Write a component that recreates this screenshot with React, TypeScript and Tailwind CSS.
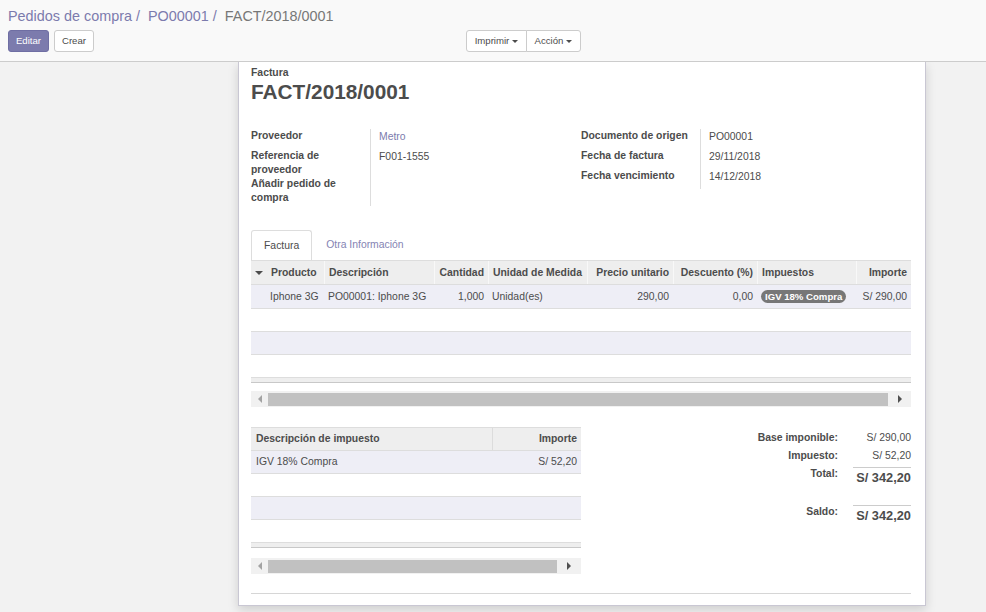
import React from "react";

const LINE_COLS = "grid grid-cols-[16px_57px_110px_54px_99px_86px_84px_99px_55px]";
const TAX_COLS = "grid grid-cols-[242px_88px]";

function Caret({ small }: { small?: boolean }) {
  return (
    <span
      className={`inline-block h-0 w-0 border-x-transparent border-t-[#4c4c4c] ${small ? "border-x-[3px] border-t-[3px]" : "border-x-[4px] border-t-[4px]"}`}
    />
  );
}

function Scrollbar({ thumb }: { thumb: string }) {
  return (
    <div className="flex h-[16px] items-center bg-[#f1f1f1]">
      <div className="flex w-[17px] justify-center">
        <span className="inline-block h-0 w-0 border-y-[4px] border-r-[4px] border-y-transparent border-r-[#a3a3a3]" />
      </div>
      <div className={`h-[13px] bg-[#c1c1c1] ${thumb}`} />
      <div className="flex flex-1 justify-center">
        <span className="inline-block h-0 w-0 border-y-[4px] border-l-[4px] border-y-transparent border-l-[#505050]" />
      </div>
    </div>
  );
}

function EmptyRow({ cols, striped }: { cols: string; striped?: boolean }) {
  return (
    <div
      className={`${cols} h-[23px] border-b border-[#dddddd] ${striped ? "bg-[#eeeef6]" : "bg-white"}`}
    />
  );
}

function Field({ label, value, last, link }: { label: React.ReactNode; value?: string; last?: string; link?: boolean }) {
  return (
    <>
      <div className={`border-r border-[#dddddd] pr-2 font-bold leading-[14px] ${last ?? "pb-[6px]"}`}>
        {label}
      </div>
      <div className={`pl-[8px] pt-[1px] leading-[14px] ${link ? "text-[#7c7bad]" : ""}`}>{value}</div>
    </>
  );
}

export default function App() {
  return (
    <div className="flex h-[612px] w-[986px] flex-col overflow-hidden bg-[#f2f2f2] font-['Liberation_Sans',Arial,sans-serif] text-[10.4px] text-[#4c4c4c]">
      {/* Control panel */}
      <div className="h-[62px] shrink-0 border-b border-[#cccccc] bg-[#f9f9f9] px-[8px] pt-[7px]">
        <div className="text-[14.4px] leading-[18px]">
          <span className="text-[#7c7bad]">Pedidos de compra</span>
          <span className="text-[#7c7bad]"> /&nbsp; </span>
          <span className="text-[#7c7bad]">PO00001</span>
          <span className="text-[#7c7bad]"> /&nbsp; </span>
          <span className="text-[#777777]">FACT/2018/0001</span>
        </div>
        <div className="mt-[5px] grid grid-cols-[458px_1fr]">
          <div className="flex gap-[5px]">
            <button className="h-[22px] w-[41px] rounded-[3px] border border-[#6f6ea3] bg-[#7c7bad] text-[9.6px] text-white">
              Editar
            </button>
            <button className="h-[22px] w-[40px] rounded-[3px] border border-[#cccccc] bg-white text-[9.6px] text-[#4c4c4c]">
              Crear
            </button>
          </div>
          <div className="flex">
            <button className="flex h-[22px] w-[61px] items-center justify-center gap-[3px] rounded-l-[3px] border border-[#cccccc] bg-white text-[9.6px]">
              Imprimir <Caret small />
            </button>
            <button className="-ml-px flex h-[22px] w-[55px] items-center justify-center gap-[3px] rounded-r-[3px] border border-[#cccccc] bg-white text-[9.6px]">
              Acción <Caret small />
            </button>
          </div>
        </div>
      </div>

      {/* Content */}
      <div className="flex-1 overflow-hidden">
        <div className="ml-[238px] w-[688px] border-x border-b border-[#c9c7d3] bg-white pb-[11px] pl-[12px] pr-[14px] pt-[4px] shadow-[0_4px_10px_rgba(0,0,0,0.15)]">
          <div className="font-bold leading-[14px]">Factura</div>
          <div className="text-[20.8px] font-bold leading-[24px]">FACT/2018/0001</div>

          {/* Header groups */}
          <div className="mt-[25px] flex">
            <div className="grid w-[330px] grid-cols-[120px_1fr] content-start">
              <Field label="Proveedor" value="Metro" link />
              <Field label={<>Referencia de<br />proveedor</>} value="F001-1555" last="pb-0" />
              <Field label={<>Añadir pedido de<br />compra</>} last="pb-[1px]" />
            </div>
            <div className="grid w-[330px] grid-cols-[120px_1fr] content-start">
              <Field label="Documento de origen" value="PO00001" />
              <Field label="Fecha de factura" value="29/11/2018" />
              <Field label="Fecha vencimiento" value="14/12/2018" last="pb-[6px]" />
            </div>
          </div>

          {/* Tabs */}
          <div className="mt-[24px] flex h-[30px]">
            <div className="flex items-center rounded-t-[3px] border border-b-0 border-[#dddddd] px-[12px]">
              Factura
            </div>
            <div className="flex items-center px-[14px] text-[#8584b3]">Otra Información</div>
          </div>

          {/* Invoice lines */}
          <div className="w-[660px]">
            <div className={`${LINE_COLS} h-[25px] items-center border-y border-[#dddddd] bg-[#eeeeee] font-bold`}>
              <div className="flex justify-center">
                <Caret />
              </div>
              <div className="px-[4px]">Producto</div>
              <div className="flex h-full items-center border-l border-[#f8f8f8] px-[4px]">Descripción</div>
              <div className="flex h-full items-center justify-end border-l border-[#f8f8f8] px-[4px]">Cantidad</div>
              <div className="flex h-full items-center border-l border-[#f8f8f8] px-[4px]">Unidad de Medida</div>
              <div className="flex h-full items-center justify-end border-l border-[#f8f8f8] px-[4px]">Precio unitario</div>
              <div className="flex h-full items-center justify-end border-l border-[#f8f8f8] px-[4px]">Descuento (%)</div>
              <div className="flex h-full items-center border-l border-[#f8f8f8] px-[4px]">Impuestos</div>
              <div className="flex h-full items-center justify-end border-l border-[#f8f8f8] px-[4px]">Importe</div>
            </div>
            <div className={`${LINE_COLS} h-[24px] items-center border-b border-[#dddddd] bg-[#eeeef6]`}>
              <div />
              <div className="whitespace-nowrap px-[3px]">Iphone 3G</div>
              <div className="whitespace-nowrap px-[4px]">PO00001: Iphone 3G</div>
              <div className="px-[4px] text-right">1,000</div>
              <div className="px-[4px]">Unidad(es)</div>
              <div className="px-[4px] text-right">290,00</div>
              <div className="px-[4px] text-right">0,00</div>
              <div className="px-[4px]">
                <span className="inline-block rounded-[10px] bg-[#777777] px-[4px] text-[9.6px] font-bold leading-[13px] text-white">
                  IGV 18% Compra
                </span>
              </div>
              <div className="whitespace-nowrap px-[4px] text-right">S/ 290,00</div>
            </div>
            <EmptyRow cols={LINE_COLS} />
            <EmptyRow cols={LINE_COLS} striped />
            <EmptyRow cols={LINE_COLS} />
            <div className="h-[5px] border-b border-[#c8c8c8] bg-[#eeeeee]" />
            <div className="mt-[8px]">
              <Scrollbar thumb="w-[620px]" />
            </div>
          </div>

          {/* Taxes + totals */}
          <div className="mt-[20px] flex">
            <div className="w-[330px]">
              <div className={`${TAX_COLS} h-[24px] items-center border-y border-[#dddddd] bg-[#eeeeee] font-bold`}>
                <div className="flex h-full items-center border-r border-[#dcdcdc] px-[5px]">Descripción de impuesto</div>
                <div className="px-[4px] text-right">Importe</div>
              </div>
              <div className={`${TAX_COLS} h-[23px] items-center border-b border-[#dddddd] bg-[#eeeef6]`}>
                <div className="px-[5px]">IGV 18% Compra</div>
                <div className="px-[4px] text-right">S/ 52,20</div>
              </div>
              <EmptyRow cols={TAX_COLS} />
              <EmptyRow cols={TAX_COLS} striped />
              <EmptyRow cols={TAX_COLS} />
              <div className="h-[5px] border-b border-[#c8c8c8] bg-[#eeeeee]" />
              <div className="mt-[10px]">
                <Scrollbar thumb="w-[289px]" />
              </div>
            </div>

            <div className="grid flex-1 grid-cols-[1fr_73px] content-start pt-[4px]">
              <div className="pb-[4px] text-right font-bold leading-[14px]">Base imponible:</div>
              <div className="pb-[4px] text-right leading-[14px]">S/ 290,00</div>
              <div className="pb-[4px] text-right font-bold leading-[14px]">Impuesto:</div>
              <div className="pb-[4px] text-right leading-[14px]">S/ 52,20</div>
              <div className="text-right font-bold leading-[14px]">Total:</div>
              <div className="mb-[17px] ml-[15px] border-t border-[#cccccc] text-right text-[12.8px] font-bold leading-[20px]">
                S/ 342,20
              </div>
              <div className="text-right font-bold leading-[14px]">Saldo:</div>
              <div className="ml-[15px] border-t border-[#cccccc] text-right text-[12.8px] font-bold leading-[20px]">
                S/ 342,20
              </div>
            </div>
          </div>

          <div className="mt-[19px] border-t border-[#d6d6d6]" />
        </div>
      </div>
    </div>
  );
}
